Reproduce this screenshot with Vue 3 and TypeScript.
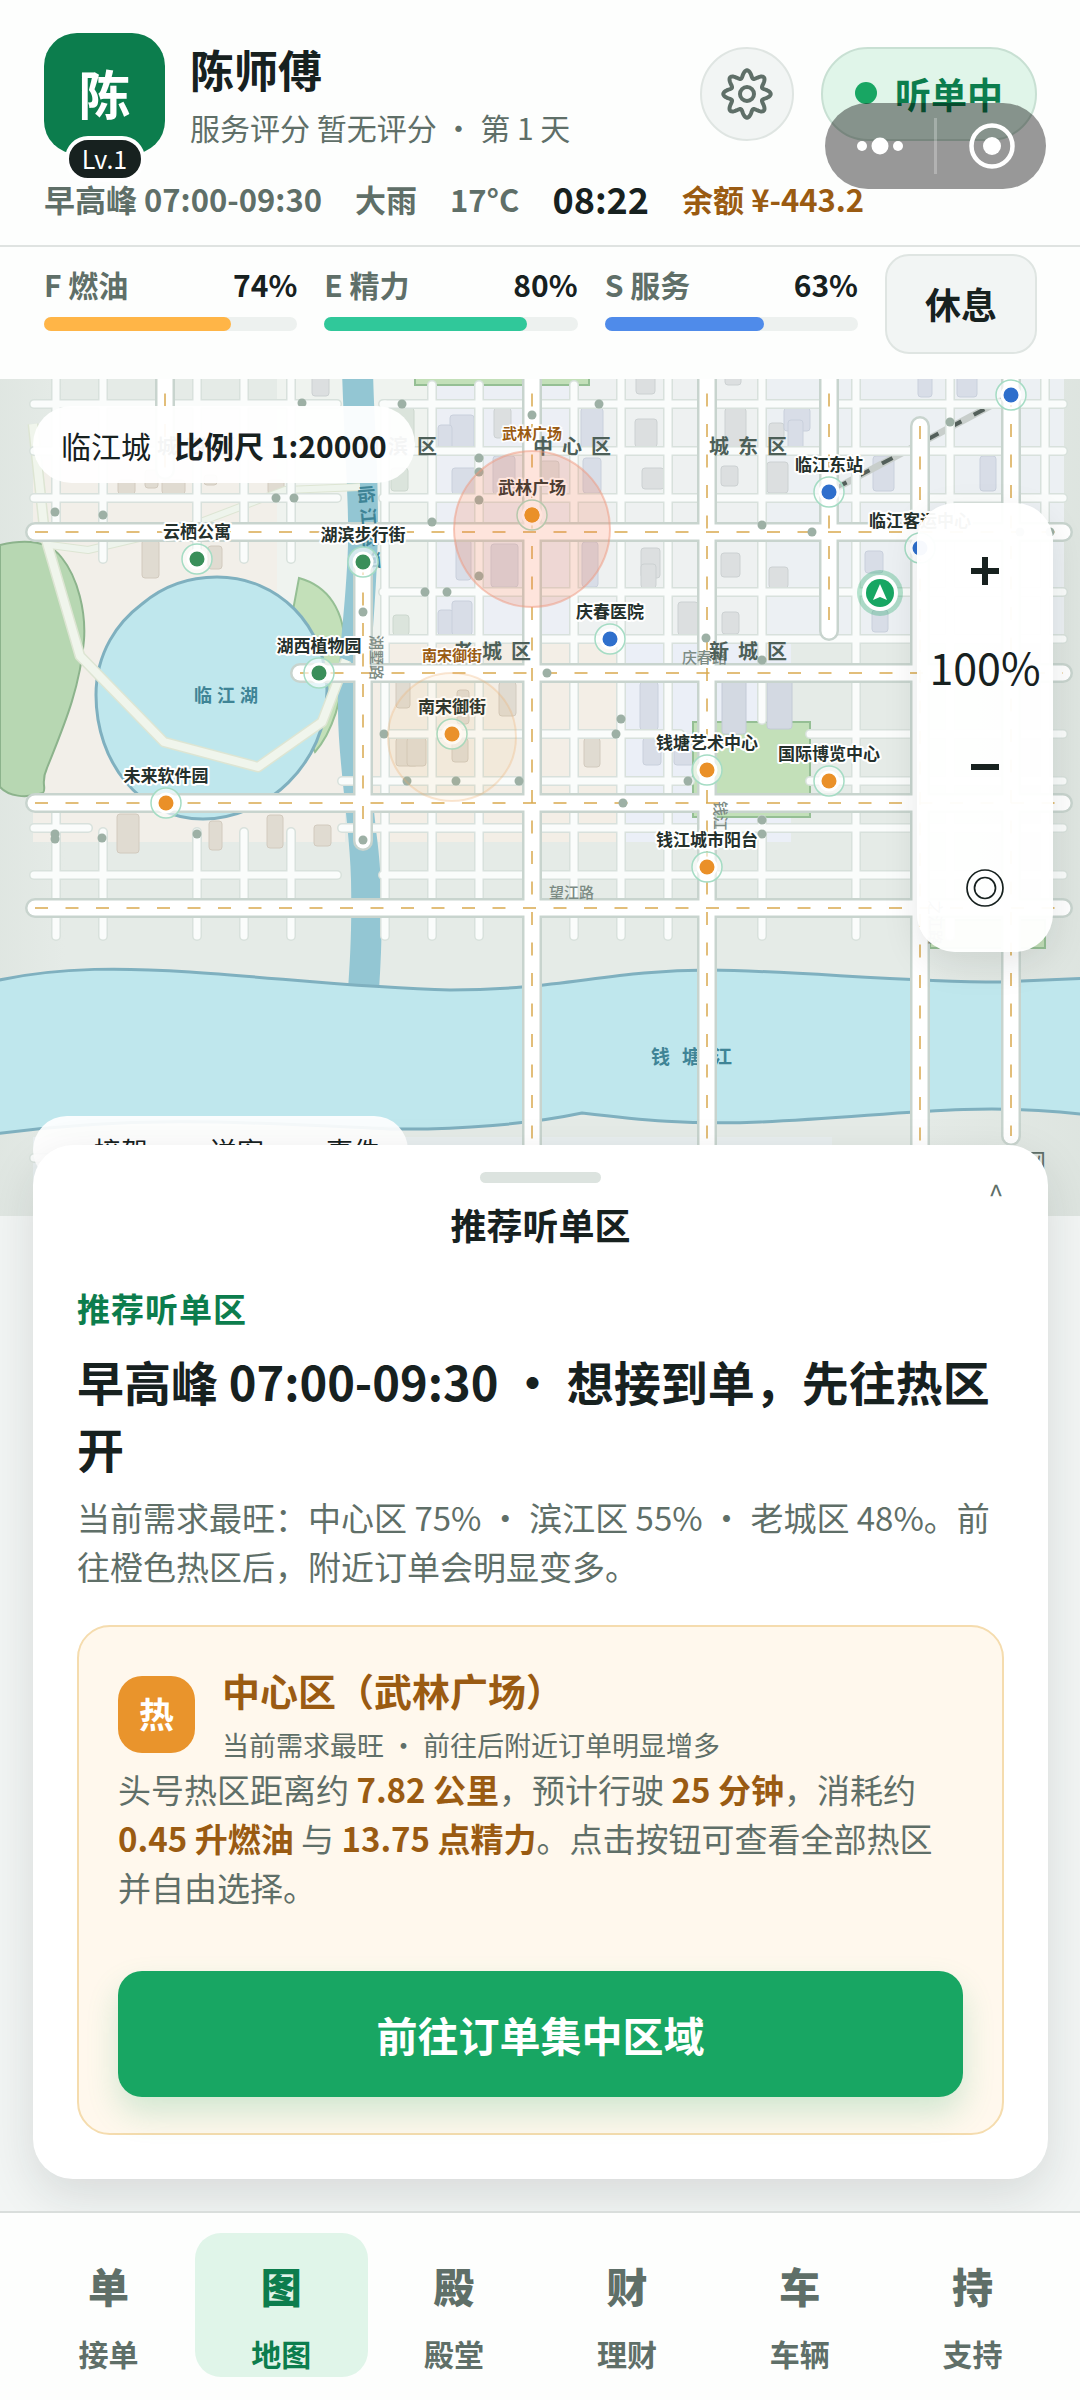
<script setup lang="ts">
import { ref } from 'vue'

interface Stat { key: string; label: string; value: number; color: string }
interface Poi { name: string; x: number; y: number; color: string }
type Line = [number, number, number, number]
type Box = [number, number, number, number]

const stats: Stat[] = [
  { key: 'F', label: '燃油', value: 74, color: '#ffb547' },
  { key: 'E', label: '精力', value: 80, color: '#30c89a' },
  { key: 'S', label: '服务', value: 63, color: '#4f8bea' },
]

const tabs = [
  { icon: '单', label: '接单' },
  { icon: '图', label: '地图' },
  { icon: '殿', label: '殿堂' },
  { icon: '财', label: '理财' },
  { icon: '车', label: '车辆' },
  { icon: '持', label: '支持' },
]
const active = ref('地图')

const legend = [
  { label: '接驾', color: '#2f6fcc' },
  { label: '送客', color: '#18a663' },
  { label: '事件', color: '#ea9028' },
]

const GREEN = '#3a8f5a'
const ORANGE = '#ea9028'
const BLUE = '#2f6fcc'

const pois: Poi[] = [
  { name: '云栖公寓', x: 197, y: 559, color: GREEN },
  { name: '湖滨步行街', x: 363, y: 562, color: GREEN },
  { name: '湖西植物园', x: 319, y: 673, color: GREEN },
  { name: '未来软件园', x: 166, y: 803, color: ORANGE },
  { name: '武林广场', x: 532, y: 515, color: ORANGE },
  { name: '庆春医院', x: 610, y: 639, color: BLUE },
  { name: '南宋御街', x: 452, y: 734, color: ORANGE },
  { name: '临江东站', x: 829, y: 492, color: BLUE },
  { name: '临江客运中心', x: 920, y: 548, color: BLUE },
  { name: '', x: 1011, y: 395, color: BLUE },
  { name: '钱塘艺术中心', x: 707, y: 770, color: ORANGE },
  { name: '国际博览中心', x: 829, y: 781, color: ORANGE },
  { name: '钱江城市阳台', x: 707, y: 867, color: ORANGE },
]

const minor: Line[] = [
  [34, 404, 337, 404], [383, 404, 1063, 404],
  [34, 451, 337, 451], [383, 451, 1063, 451],
  [34, 498, 337, 498], [383, 498, 1063, 498],
  [383, 592, 1063, 592], [383, 639, 1063, 639],
  [385, 734, 680, 734], [810, 734, 1063, 734],
  [342, 781, 690, 781], [810, 781, 1063, 781],
  [34, 828, 88, 828], [342, 828, 1063, 828],
  [34, 875, 337, 875], [383, 875, 1063, 875],
  [34, 1158, 500, 1158],
  [56, 370, 56, 525], [103, 370, 103, 559], [197, 370, 197, 559], [244, 370, 244, 559], [291, 370, 291, 559],
  [56, 803, 56, 936], [103, 832, 103, 936], [197, 832, 197, 936], [244, 832, 244, 936], [291, 832, 291, 936],
  [385, 404, 385, 936], [432, 385, 432, 936], [479, 385, 479, 936],
  [574, 385, 574, 936], [621, 370, 621, 936], [668, 370, 668, 936],
  [762, 370, 762, 720], [762, 820, 762, 936],
  [856, 370, 856, 936], [950, 370, 950, 936], [1045, 370, 1045, 900],
]

const major: Line[] = [
  [35, 532, 1063, 532], [300, 673, 1063, 673], [35, 803, 1063, 803], [35, 908, 1063, 908],
  [165, 363, 165, 470], [363, 562, 363, 841], [532, 363, 532, 1180], [707, 363, 707, 1180],
  [829, 363, 829, 631], [920, 426, 920, 1180], [1011, 363, 1011, 1136],
]

const junctions: [number, number][] = [
  [302, 403], [276, 498], [294, 498], [55, 512], [103, 515], [402, 404], [599, 404], [532, 415],
  [479, 458], [479, 472], [479, 500], [432, 522], [479, 576], [425, 592], [447, 592], [363, 612],
  [547, 673], [706, 638], [762, 660], [384, 734], [621, 719], [616, 734], [950, 422], [762, 525],
  [812, 532], [407, 781], [456, 781], [519, 781], [688, 781], [623, 803], [762, 820], [762, 834],
  [197, 834], [102, 838], [55, 834], [55, 839], [363, 840], [1020, 532], [1050, 532],
]

const tan: Box[] = [
  [118, 480, 17, 14], [145, 470, 13, 18], [162, 480, 23, 14], [204, 475, 13, 10], [268, 480, 16, 14],
  [142, 540, 17, 38], [208, 546, 14, 23], [396, 680, 14, 28], [457, 690, 12, 34], [499, 682, 17, 34],
  [396, 738, 22, 28], [407, 738, 19, 28], [452, 738, 16, 24], [584, 738, 16, 29],
  [117, 814, 22, 39], [209, 821, 13, 29], [267, 815, 16, 33], [314, 825, 17, 21],
]
const grey: Box[] = [
  [312, 376, 17, 20], [494, 408, 17, 30], [636, 376, 19, 18], [635, 419, 22, 28], [642, 468, 22, 21],
  [641, 548, 19, 30], [641, 564, 15, 24], [678, 602, 20, 33], [725, 376, 16, 9], [725, 408, 21, 42],
  [769, 423, 15, 17], [721, 466, 17, 20], [767, 462, 21, 31], [721, 553, 19, 24], [769, 567, 19, 21],
  [722, 612, 17, 22], [540, 461, 19, 25],
]
const blue: Box[] = [
  [450, 415, 24, 35], [438, 425, 14, 24], [452, 468, 28, 26], [581, 408, 22, 42], [493, 456, 22, 38],
  [583, 458, 18, 35], [456, 540, 15, 40], [491, 544, 27, 43], [582, 542, 16, 45], [438, 610, 15, 25],
  [452, 601, 20, 34], [640, 682, 18, 48], [643, 738, 18, 27], [674, 738, 24, 27], [784, 408, 26, 23],
  [788, 420, 15, 30], [865, 551, 18, 22], [872, 610, 16, 22], [873, 456, 21, 35], [918, 370, 14, 27],
  [957, 370, 20, 27], [980, 456, 16, 35],
]
const tall: Box[] = [[722, 680, 24, 54], [767, 680, 25, 49]]
const green: Box[] = [[390, 408, 24, 37], [391, 468, 17, 23], [393, 615, 16, 20]]

const districts = [
  { name: '城西区', x: 157, y: 454 }, { name: '湖滨区', x: 359, y: 454 }, { name: '中心区', x: 533, y: 454 },
  { name: '城东区', x: 709, y: 454 }, { name: '老城区', x: 453, y: 659 }, { name: '新城区', x: 709, y: 659 },
]

const gear = Array.from({ length: 180 }, (_, i) => {
  const a = (i * Math.PI) / 90
  const r = 20 + 3.7 * Math.cos(8 * a)
  return `${(30 + r * Math.sin(a)).toFixed(2)},${(30 - r * Math.cos(a)).toFixed(2)}`
}).join(' ')
</script>

<template>
  <div class="page">
    <header class="head">
      <div class="profile">
        <div class="avatar">陈<span class="level">Lv.1</span></div>
        <div class="who">
          <h1>陈师傅</h1>
          <p>服务评分 暂无评分 ・ 第 1 天</p>
        </div>
        <button class="gear" type="button" aria-label="设置">
          <svg viewBox="0 0 60 60" width="60" height="60" fill="none" stroke="#5f6f68" stroke-width="4" stroke-linejoin="round">
            <polygon :points="gear" />
            <circle cx="30" cy="30" r="7" />
          </svg>
        </button>
        <button class="online" type="button"><i></i>听单中</button>
      </div>
      <div class="facts">
        <span>早高峰 07:00-09:30</span>
        <span>大雨</span>
        <span>17°C</span>
        <time>08:22</time>
        <span class="money">余额 ¥-443.2</span>
      </div>
      <div class="capsule">
        <button type="button" aria-label="更多">
          <svg viewBox="0 0 48 20" width="48" height="20" fill="#fff"><circle cx="6" cy="10" r="5" /><circle cx="24" cy="10" r="8.5" /><circle cx="42" cy="10" r="5" /></svg>
        </button>
        <b></b>
        <button type="button" aria-label="关闭">
          <svg viewBox="0 0 48 48" width="48" height="48"><circle cx="24" cy="24" r="20.5" fill="none" stroke="#fff" stroke-width="4.5" /><circle cx="24" cy="24" r="9" fill="#fff" /></svg>
        </button>
      </div>
    </header>

    <section class="stats">
      <div v-for="s in stats" :key="s.key" class="stat">
        <div class="row"><span>{{ s.key }} {{ s.label }}</span><strong>{{ s.value }}%</strong></div>
        <div class="track"><div class="fill" :style="{ width: s.value + '%', background: s.color }"></div></div>
      </div>
      <button class="rest" type="button">休息</button>
    </section>

    <section class="map">
      <svg class="canvas" viewBox="0 379 1080 837" preserveAspectRatio="xMidYMid slice">
        <defs>
          <linearGradient id="haze" x1="0" x2="1" y1="0" y2="0">
            <stop offset="0" stop-color="#dce3de" stop-opacity=".6" />
            <stop offset=".06" stop-color="#dce3de" stop-opacity="0" />
            <stop offset=".86" stop-color="#dce3de" stop-opacity="0" />
            <stop offset="1" stop-color="#dce3de" stop-opacity=".8" />
          </linearGradient>
        </defs>
        <rect y="370" width="1080" height="860" fill="#e5ebe7" />
        <rect y="370" width="1080" height="860" fill="url(#haze)" />
        <rect x="33" y="460" width="312" height="382" fill="#f2efe9" />
        <rect x="277" y="370" width="155" height="303" fill="#eff3ef" />
        <rect x="432" y="370" width="142" height="303" fill="#eceff5" />
        <rect x="574" y="370" width="190" height="303" fill="#eef1f1" />
        <rect x="764" y="370" width="300" height="264" fill="#ecf0f3" />
        <rect x="371" y="640" width="250" height="202" fill="#f3eee6" />
        <rect x="621" y="640" width="170" height="202" fill="#ebeff7" />
        <rect x="33" y="1137" width="799" height="60" fill="#e8eeef" />
        <g stroke-width="1">
          <rect v-for="(b, i) in tan" :key="'t' + i" :x="b[0]" :y="b[1]" :width="b[2]" :height="b[3]" rx="3" fill="#e0dbd1" stroke="#d2cabe" />
          <rect v-for="(b, i) in grey" :key="'y' + i" :x="b[0]" :y="b[1]" :width="b[2]" :height="b[3]" rx="3" fill="#dcdfe0" stroke="#ccd1d2" />
          <rect v-for="(b, i) in blue" :key="'b' + i" :x="b[0]" :y="b[1]" :width="b[2]" :height="b[3]" rx="3" fill="#d8dde7" stroke="#c9d0dc" />
          <rect v-for="(b, i) in green" :key="'g' + i" :x="b[0]" :y="b[1]" :width="b[2]" :height="b[3]" rx="3" fill="#dbe4dc" stroke="#ccd7ce" />
        </g>
        <g fill="#c3e0b9" stroke="#95bf94" stroke-width="2">
          <rect x="415" y="370" width="174" height="15" />
          <rect x="693" y="722" width="117" height="95" />
          <rect x="930" y="920" width="115" height="28" />
          <path d="M0 545C30 538 50 542 62 558C78 578 86 612 84 640C80 690 62 730 47 768C40 783 47 788 43 793C25 799 8 796 0 787Z" fill="#b7d7b2" stroke="#8cb38c" />
          <path d="M299 578C328 586 345 610 345 650C345 700 330 735 315 752L280 680Z" />
        </g>
        <rect v-for="(b, i) in tall" :key="'l' + i" :x="b[0]" :y="b[1]" :width="b[2]" :height="b[3]" rx="3" fill="#d3d9e2" stroke="#c3cad6" />
        <path d="M342 370C344 440 349 500 348 545C346 610 337 660 338 710C338 760 350 830 351 880C352 930 350 960 348 990H379C383 930 383 880 376 830C372 790 367 750 369 700C371 640 378 580 378 520C378 460 374 420 373 370Z" fill="#93c6d3" />
        <path d="M217 577C278 577 326 625 327 690C327 765 265 819 203 819C140 819 96 762 96 695C96 652 118 622 142 604C162 587 186 577 217 577Z" fill="#bfe7ed" stroke="#7fb0bf" stroke-width="3" />
        <path d="M-5 981C60 966 130 968 190 972C280 978 360 988 450 990C560 990 610 970 710 970C800 971 900 982 1000 982L1090 978V1115L1060 1112C960 1103 880 1117 760 1122C690 1125 640 1120 582 1113C530 1124 460 1130 390 1129C260 1123 140 1114 -5 1134Z" fill="#bfe7ed" stroke="#7fb0bf" stroke-width="3" />
        <g class="water">
          <text x="194" y="702" font-size="18" letter-spacing="5">临江湖</text>
          <text x="651" y="1064" font-size="19" letter-spacing="12">钱塘江</text>
        </g>
        <g fill="none" stroke-linejoin="round">
          <path d="M33 424L45 536L80 656L164 742L258 767L322 722L346 660" stroke="#dde5d3" stroke-width="11" />
          <path d="M50 545L88 550L190 526L285 490L360 487" stroke="#dde5d3" stroke-width="8" />
          <path d="M33 424L45 536L80 656L164 742L258 767L322 722L346 660" stroke="#f0f5ec" stroke-width="8" />
          <path d="M50 545L88 550L190 526L285 490L360 487" stroke="#eef4ec" stroke-width="6" />
          <path d="M829 492L1011 395" stroke="#c8cecb" stroke-width="7" />
          <path d="M836 488L1011 395" stroke="#535f5a" stroke-width="4" stroke-dasharray="12 14" />
        </g>
        <g stroke-linecap="round">
          <line v-for="(l, i) in minor" :key="'mc' + i" :x1="l[0]" :y1="l[1]" :x2="l[2]" :y2="l[3]" stroke="#d8e1dc" stroke-width="10" />
          <line v-for="(l, i) in minor" :key="'mf' + i" :x1="l[0]" :y1="l[1]" :x2="l[2]" :y2="l[3]" stroke="#fafcfb" stroke-width="7" />
          <line v-for="(l, i) in major" :key="'Mc' + i" :x1="l[0]" :y1="l[1]" :x2="l[2]" :y2="l[3]" stroke="#c8d4ce" stroke-width="20" />
          <line v-for="(l, i) in major" :key="'Mf' + i" :x1="l[0]" :y1="l[1]" :x2="l[2]" :y2="l[3]" stroke="#fff" stroke-width="15" />
        </g>
        <line v-for="(l, i) in major" :key="'d' + i" :x1="l[0]" :y1="l[1]" :x2="l[2]" :y2="l[3]" stroke="#d9a94f" stroke-width="1.5" stroke-dasharray="13 17.5" />
        <g fill="#9db0a5"><circle v-for="(j, i) in junctions" :key="'j' + i" :cx="j[0]" :cy="j[1]" r="4.5" /></g>
        <text class="water" transform="translate(359 486) rotate(85)" font-size="18" letter-spacing="4">临江运河</text>
        <g class="street">
          <text x="682" y="663">庆春路</text>
          <text x="549" y="898">望江路</text>
          <text transform="translate(371 635) rotate(90)">湖墅路</text>
          <text transform="translate(715 801) rotate(90)">钱江路</text>
          <text transform="translate(930 900) rotate(90)">之江路</text>
        </g>
        <g class="district"><text v-for="d in districts" :key="d.name" :x="d.x" :y="d.y">{{ d.name }}</text></g>
        <g v-for="p in pois" :key="p.name">
          <circle :cx="p.x" :cy="p.y" r="15" fill="#fff" fill-opacity=".6" stroke="#a5dcc4" stroke-width="1.5" />
          <circle :cx="p.x" :cy="p.y" r="10.5" fill="#fff" />
          <circle :cx="p.x" :cy="p.y" r="7.5" :fill="p.color" />
          <text class="poi" :x="p.x" :y="p.y - 21">{{ p.name }}</text>
        </g>
        <circle cx="532" cy="529" r="78" fill="#f97a4e" fill-opacity=".2" stroke="#f0977e" stroke-opacity=".5" stroke-width="2" />
        <circle cx="452" cy="737" r="64" fill="#f6a94c" fill-opacity=".07" stroke="#f0b070" stroke-opacity=".3" stroke-width="2" />
        <circle cx="532" cy="515" r="7.5" fill="#ea9028" />
        <g class="hot"><text x="532" y="439">武林广场</text><text x="452" y="661">南宋御街</text></g>
        <circle cx="880" cy="593" r="23" fill="#18a663" fill-opacity=".3" />
        <circle cx="880" cy="593" r="18" fill="#fff" />
        <circle cx="880" cy="593" r="14" fill="#18a663" />
        <path d="M880 584L887 600L880 597L873 600Z" fill="#fff" />
      </svg>
      <div class="chip"><span>临江城</span><strong>比例尺 1:20000</strong></div>
      <div class="legend"><span v-for="l in legend" :key="l.label"><i :style="{ background: l.color }"></i>{{ l.label }}</span></div>
      <span class="mode">路网</span>
      <div class="zoom">
        <button type="button" aria-label="放大"><svg viewBox="0 0 28 28" width="28" height="28" stroke="#17211f" stroke-width="6"><path d="M0 14H28M14 0V28" /></svg></button>
        <output>100%</output>
        <button type="button" aria-label="缩小"><svg viewBox="0 0 28 28" width="28" height="28" stroke="#17211f" stroke-width="6"><path d="M0 14H28" /></svg></button>
        <button class="locate" type="button" aria-label="定位"><svg viewBox="0 0 40 40" width="40" height="40" fill="none" stroke="#17211f" stroke-width="1.7"><circle cx="20" cy="20" r="18" /><circle cx="20" cy="20" r="10.5" /></svg></button>
      </div>
    </section>

    <main class="sheet">
      <div class="grip"></div>
      <button class="expand" type="button" aria-label="展开">^</button>
      <h2>推荐听单区</h2>
      <p class="eyebrow">推荐听单区</p>
      <h3>早高峰 07:00-09:30 ・ 想接到单，先往热区开</h3>
      <p class="text">当前需求最旺：中心区 75% ・ 滨江区 55% ・ 老城区 48%。前往橙色热区后，附近订单会明显变多。</p>
      <article class="card">
        <div class="zone">
          <span class="tag">热</span>
          <div><h4>中心区（武林广场）</h4><p>当前需求最旺 ・ 前往后附近订单明显增多</p></div>
        </div>
        <p class="text">头号热区距离约 <b>7.82 公里</b>，预计行驶 <b>25 分钟</b>，消耗约 <b>0.45 升燃油</b> 与 <b>13.75 点精力</b>。点击按钮可查看全部热区并自由选择。</p>
        <button class="go" type="button">前往订单集中区域</button>
      </article>
    </main>

    <nav class="tabs">
      <button v-for="t in tabs" :key="t.label" type="button" :class="{ on: t.label === active }" @click="active = t.label">
        <b>{{ t.icon }}</b><span>{{ t.label }}</span>
      </button>
    </nav>
  </div>
</template>

<style>
body { margin: 0; background: #f2f5f4; }
</style>

<style scoped>
* { box-sizing: border-box; }
.page { font-family: "Noto Sans CJK SC", "Noto Sans", sans-serif; color: #17211f; background: #f2f5f4; }
button { font: inherit; color: inherit; border: 0; padding: 0; background: none; display: flex; align-items: center; justify-content: center; cursor: pointer; }
h1, h2, h3, h4, p { margin: 0; }
.head { position: relative; background: #fdfefd; padding: 33px 43px 0 44px; height: 247px; border-bottom: 2px solid #dfe3e1; }
.profile { display: flex; align-items: center; height: 121px; }
.avatar { position: relative; width: 121px; height: 121px; border-radius: 33px; background: #0c7d4d; color: #fff; font-size: 52px; font-weight: 700; padding-bottom: 2px; display: flex; align-items: center; justify-content: center; }
.level { position: absolute; left: 50%; bottom: -28px; transform: translateX(-50%); width: 80px; height: 46px; border: 4px solid #fff; border-radius: 23px; background: #17211f; font-size: 25px; font-weight: 400; line-height: 36px; text-align: center; }
.who { flex: 1; padding-left: 25px; }
h1 { font-size: 44px; line-height: 60px; font-weight: 700; }
.who p { font-size: 30px; line-height: 44px; margin-top: 6px; color: #5f6f68; white-space: nowrap; }
.gear { width: 94px; height: 94px; border-radius: 50%; border: 2px solid #dfe5e2; background: #f2f5f4; margin-right: 27px; }
.online { width: 216px; height: 94px; border-radius: 47px; border: 2px solid #c8e0d3; background: #e0f5e9; color: #0c7d4d; font-size: 36px; font-weight: 700; gap: 18px; padding-bottom: 2px; }
.online i { width: 22px; height: 22px; border-radius: 50%; background: #18a663; }
.facts { display: flex; align-items: center; gap: 33px; height: 60px; margin-top: 14px; font-size: 31px; font-weight: 600; color: #5f6f68; white-space: nowrap; }
.facts time { font-size: 36px; color: #17211f; }
.facts .money { color: #9a5b12; }
.capsule { position: absolute; z-index: 2; right: 34px; top: 103px; width: 221px; height: 86px; border-radius: 43px; background: rgba(0, 0, 0, .4); display: flex; align-items: center; }
.capsule button { flex: 1; }
.capsule b { width: 3px; height: 56px; background: rgba(255, 255, 255, .25); }
.stats { display: flex; gap: 27px; padding: 7px 43px 25px 44px; background: #fdfefd; }
.stat { flex: 1; padding-top: 8px; }
.row { display: flex; justify-content: space-between; font-size: 30px; line-height: 44px; font-weight: 600; color: #5f6f68; }
.row strong { color: #17211f; font-weight: 600; }
.track { height: 14px; margin-top: 11px; border-radius: 7px; background: #edf1ef; }
.fill { height: 14px; border-radius: 7px; }
.rest { width: 152px; height: 100px; padding-bottom: 3px; border-radius: 24px; border: 2px solid #dfe5e2; background: #f2f5f4; font-size: 36px; font-weight: 700; }
.map { position: relative; height: 837px; overflow: hidden; }
.canvas { display: block; width: 100%; height: 100%; font-family: inherit; }
.water { fill: #3f8496; font-weight: 600; }
.street { fill: #7c8b84; font-size: 15px; font-weight: 500; }
.district { fill: #4d5f58; font-size: 20px; font-weight: 600; letter-spacing: 9px; }
.poi { fill: #24302c; font-size: 17px; font-weight: 600; text-anchor: middle; stroke: #fff; stroke-width: 4px; stroke-linejoin: round; paint-order: stroke; }
.hot { fill: #9a5b12; font-size: 15px; font-weight: 600; text-anchor: middle; stroke: #fff; stroke-width: 3px; paint-order: stroke; }
.chip { position: absolute; left: 33px; top: 27px; height: 77px; padding: 0 28px; border-radius: 39px; background: rgba(255, 255, 255, .94); display: flex; align-items: center; gap: 23px; font-size: 30px; white-space: nowrap; }
.chip strong { font-weight: 700; }
.legend { position: absolute; left: 33px; top: 737px; height: 68px; padding: 0 28px 0 24px; border-radius: 34px; background: rgba(255, 255, 255, .92); display: flex; align-items: center; gap: 25px; font-size: 27px; }
.legend span { display: flex; align-items: center; gap: 9px; }
.legend i { width: 28px; height: 4px; border-radius: 2px; margin-top: 6px; }
.mode { position: absolute; right: 34px; top: 764px; font-size: 24px; line-height: 36px; color: #5f6f68; }
.zoom { position: absolute; right: 27px; top: 124px; width: 136px; height: 449px; padding: 19px 0 16px; border-radius: 38px; background: rgba(255, 255, 255, .96); box-shadow: 0 12px 36px rgba(23, 33, 31, .1); display: flex; flex-direction: column; }
.zoom button, .zoom output { height: 98px; display: flex; align-items: center; justify-content: center; font-size: 43px; }
.zoom output { padding-bottom: 7px; }
.zoom .locate { height: 96px; margin-top: 24px; }
.sheet { position: relative; margin: -71px 32px 32px 33px; padding: 27px 44px 44px; border-radius: 40px; background: #fff; box-shadow: 0 16px 48px rgba(23, 33, 31, .12); }
.grip { width: 121px; height: 11px; margin: 0 auto; border-radius: 6px; background: #dce3df; }
.expand { position: absolute; right: 34px; top: 26px; width: 36px; height: 44px; font-size: 27px; color: #5f6f68; }
h2 { margin-top: 15px; text-align: center; font-size: 36px; line-height: 52px; font-weight: 700; }
.eyebrow { margin-top: 33px; font-size: 33px; line-height: 50px; font-weight: 600; letter-spacing: 1px; color: #0c7d4d; }
h3 { margin-top: 14px; font-size: 47px; line-height: 67px; font-weight: 700; }
.text { font-size: 33px; line-height: 49px; color: #5f6f68; }
h3 + .text { margin-top: 12px; }
.card { margin-top: 34px; padding: 36px 39px 36px; border: 2px solid #f5dcae; border-radius: 33px; background: #fff8ed; }
.zone { display: flex; align-items: center; gap: 27px; }
.tag { width: 77px; height: 77px; border-radius: 24px; background: #e9942c; color: #fff; font-size: 35px; font-weight: 700; line-height: 74px; text-align: center; }
h4 { font-size: 38px; line-height: 54px; font-weight: 700; color: #9a5b12; }
.zone p { font-size: 27px; line-height: 40px; margin-top: 8px; color: #5f6f68; }
.text b { color: #9a5b12; font-weight: 700; }
.go { width: 100%; height: 126px; margin-top: 59px; border-radius: 24px; background: #18a663; color: #fff; font-size: 41px; font-weight: 700; box-shadow: 0 16px 32px rgba(24, 166, 99, .2); }
.tabs { position: relative; display: grid; grid-template-columns: repeat(6, 1fr); height: 189px; padding: 20px 21px 0 22px; border-top: 2px solid #d9dedc; background: #fdfefd; }
.tabs button { flex-direction: column; justify-content: flex-start; height: 144px; padding-top: 22px; border-radius: 26px; color: #5f6f68; font-weight: 700; }
.tabs .on { background: #e0f5e9; color: #0c7d4d; }
.tabs b { font-size: 41px; line-height: 60px; }
.tabs span { margin-top: 16px; font-size: 30px; line-height: 44px; }
</style>
